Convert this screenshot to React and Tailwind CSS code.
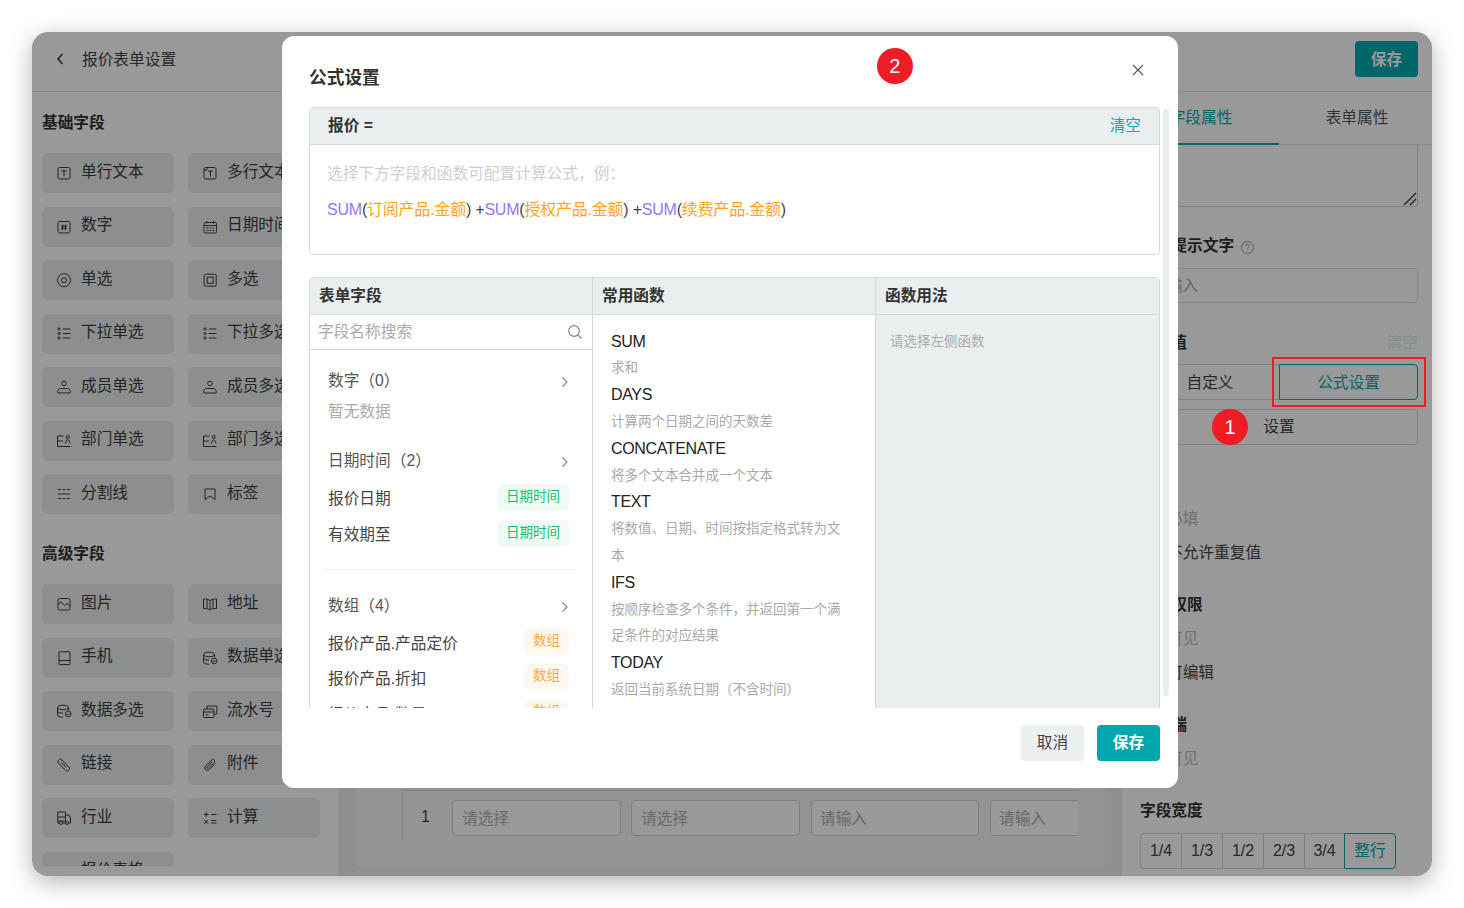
import React from "react";

const I = {
  text: <><rect x="2" y="2.5" width="12" height="11.5" rx="1.5"/><path d="M5.5 5.8h5M8 5.8v5.5"/></>,
  multi: <><rect x="2" y="2.5" width="12" height="11.5" rx="1.5"/><path d="M2 5h3V2.5M6 6h5M8.5 6v5.5"/></>,
  num: <><rect x="2" y="2.5" width="12" height="11.5" rx="1.5"/><path d="M6.8 5.5l-.6 5.5M9.8 5.5l-.6 5.5M5 7.2h6M5 9.3h6"/></>,
  date: <><rect x="2" y="3.5" width="12.5" height="10.5" rx="1.2"/><path d="M2 6.5h12.5M5 2v2.5M11.5 2v2.5M4.5 9h2M7.5 9h2M10.5 9h2M4.5 11.5h2M7.5 11.5h2M10.5 11.5h2"/></>,
  radio: <><circle cx="8" cy="8.2" r="6.5"/><circle cx="8" cy="8.2" r="2.6"/></>,
  check: <><rect x="2.2" y="2.2" width="12" height="12" rx="1.4"/><rect x="5.2" y="5.2" width="6" height="6"/></>,
  list: <><circle cx="3" cy="3" r="1.1"/><circle cx="3" cy="7.5" r="1.1"/><circle cx="3" cy="12" r="1.1"/><path d="M6.8 3h7.5M6.8 7.500h7.500M6.800 12h7.500"/></>,
  user: <><circle cx="8" cy="4.500" r="2.300"/><path d="M1.800 14v-1.500c0-1.700 1-3 2.700-3h7c1.700 0 2.700 1.300 2.700 3V14z"/></>,
  dept: <><path d="M7.500 13.500H1.500V3h6M1.500 8H7M7.500 13.500h7"/><circle cx="11.700" cy="4" r="1.500"/><path d="M9.500 10.500c.3-2 1.200-3.800 2.200-3.800s1.900 1.800 2.300 3.800"/></>,
  divider: <path d="M2 3.500h3M6.500 3.500h3M11 3.500h3M2 8h12M2 12.500h3M6.500 12.500h3M11 12.500h3"/>,
  tag: <path d="M3 3h10v10.500L8 10l-5 3.500z"/>,
  image: <><rect x="2" y="2.500" width="12" height="11.500" rx="1.500"/><path d="M2 8.500L5 6l3.500 3.500L11 7.500l3 2.500"/></>,
  map: <path d="M8 5c-1-1.500-2.500-2-4.500-2H1.500v9.500h2c2 0 3.500.5 4.500 1.500 1-1 2.500-1.500 4.500-1.500h2V3H12.500c-2 0-3.500.5-4.500 2zM8 5v9M5 3v9.500M11 3v9.500"/>,
  phone: <><rect x="3" y="1.800" width="11" height="12.800" rx="1"/><path d="M3 10.500h11M8.500 12.500h.1"/></>,
  db: <><ellipse cx="7" cy="4.500" rx="5.500" ry="2.300"/><path d="M1.500 4.500v7.500c0 1.200 2 2.200 5.500 2.200M1.500 8c0 1.300 2.200 2.200 5.500 2.200M12.500 4.500v3"/><circle cx="12.200" cy="11" r="2.800"/><path d="M10.900 11l1 1 1.600-1.700"/></>,
  serial: <><rect x="1.500" y="6" width="10.500" height="8.500" rx="1"/><path d="M1.500 9h10.500M3.800 11.800h2.500M5 6V3h9.800v8H12"/></>,
  link: <path d="M2.500 3c1-1 2.300-1 3.300 0l7 7c1 1 1 2.400 0 3.400s-2.300.8-3.200-.1L2.700 6.400C1.800 5.500 1.700 3.900 2.500 3zM5.500 5.500l5 5"/>,
  clip: <path d="M13.300 6.500l-6 6c-1.200 1.200-2.800 1.200-3.800.2s-1-2.600.2-3.800l5.800-5.800c.8-.8 1.900-.8 2.600-.1s.7 1.800-.1 2.600l-5.600 5.600c-.4.400-1 .400-1.300 0s-.4-.9 0-1.300l5-5"/>,
  biz: <><path d="M9.500 2H1.800v9h7.700zM1.800 7h7.700M9.500 5H13l1.500 3v5h-1.500M1.800 11v2h1.700M6.500 13h3"/><circle cx="5" cy="13" r="1.500"/><circle cx="11" cy="13" r="1.500"/></>,
  calc: <path d="M2 4.500h4.500M4.250 2.200v4.600M9 4.500h5.500M2.200 9.800l4 4M6.200 9.800l-4 4M9 10.500h5.500M9 13h5.500"/>,
  table: <><rect x="2" y="2.500" width="12" height="11.500" rx="1"/><path d="M2 6.500h12M8 6.500V14"/></>,
};

function Icon({ n }) {
  return (
    <svg viewBox="0 0 16 16" className="w-4 h-4 shrink-0" fill="none" stroke="currentColor" strokeWidth="1">
      {I[n]}
    </svg>
  );
}

function Tile({ n, t }) {
  return (
    <div className="h-10 bg-[#ebedef] rounded-md flex items-center pl-[14px] gap-[9px] text-[#3c3c3c] overflow-hidden whitespace-nowrap">
      <Icon n={n} />
      <span className="pb-[3px]">{t}</span>
    </div>
  );
}

const basic = [
  ["text", "单行文本"], ["multi", "多行文本"], ["num", "数字"], ["date", "日期时间"],
  ["radio", "单选"], ["check", "多选"], ["list", "下拉单选"], ["list", "下拉多选"],
  ["user", "成员单选"], ["user", "成员多选"], ["dept", "部门单选"], ["dept", "部门多选"],
  ["divider", "分割线"], ["tag", "标签"],
];
const adv = [
  ["image", "图片"], ["map", "地址"], ["phone", "手机"], ["db", "数据单选"],
  ["db", "数据多选"], ["serial", "流水号"], ["link", "链接"], ["clip", "附件"],
  ["biz", "行业"], ["calc", "计算"], ["table", "报价表格"],
];

function Left() {
  return (
    <div className="w-[306px] shrink-0 h-[774px] overflow-hidden pl-[10px] pt-[20px]">
      <div className="h-[22px] leading-[22px] font-bold text-[#333] mb-[19.200px]">基础字段</div>
      <div className="grid grid-cols-[132px_132px] gap-x-[14px] gap-y-[13.5px]">
        {basic.map(([n, t]) => <Tile key={t} n={n} t={t} />)}
      </div>
      <div className="h-[22px] leading-[22px] font-bold text-[#333] mt-[29px] mb-[19px]">高级字段</div>
      <div className="grid grid-cols-[132px_132px] gap-x-[14px] gap-y-[13.5px]">
        {adv.map(([n, t]) => <Tile key={t} n={n} t={t} />)}
      </div>
    </div>
  );
}

function Center() {
  const inputs = [["请选择", "w-[169px]", "mr-[10px]", "px-[9px]"], ["请选择", "w-[169px]", "mr-[11px]", "px-[9px]"], ["请输入", "w-[168px]", "mr-[11px]", "px-[8px]"], ["请输入", "w-[169px]", "", "px-[8px]"]];
  return (
    <div className="flex-1 bg-[#eeeff0] pt-[16px] pl-[18px] pr-[17px] pb-[10px] flex">
      <div className="flex-1 bg-[#f7f7f8] rounded flex flex-col justify-end pl-[46px] pb-[26px]">
        <div className="w-[676px] h-[50px] border-l border-t border-[#d9d9d9] flex items-start pt-[9px] overflow-hidden">
          <div className="w-[45px] mr-[4px] h-9 leading-[34px] text-center text-[#444] text-[16px] shrink-0">1</div>
          {inputs.map(([t, w, m, p], i) => (
            <div key={i} className={`${w} ${m} ${p} h-9 shrink-0 border border-[#d5d5d5] rounded bg-white leading-[36px] text-[#b0b0b0]`}>{t}</div>
          ))}
        </div>
      </div>
    </div>
  );
}

function Check({ on }) {
  return <span className={`w-4 h-4 border border-[#d5d5d5] rounded-sm mr-[11px] shrink-0 ${on ? "bg-[#00a8ad]" : "bg-white"}`} />;
}

function Right() {
  const label = "h-[22px] leading-[22px] font-bold text-[#333]";
  const row = "h-[22px] leading-[22px] flex items-center text-[#444]";
  return (
    <div className="w-[310px] shrink-0 flex flex-col">
      <div className="h-[53px] shrink-0 border-b border-[#e3e5e6] flex text-center">
        <div className="w-[157px] h-[53px] border-b-2 border-[#00a8ad] text-[#00a8ad] leading-[52px] pl-[1px]">字段属性</div>
        <div className="flex-1 leading-[52px] text-[#555] pl-[3px]">表单属性</div>
      </div>
      <div className="pl-[18px] pr-[14px]">
        <div className="relative h-[62px] border border-t-0 border-[#d5d8da] rounded-b">
          <svg className="absolute right-0 bottom-0 w-[14px] h-[14px]" viewBox="0 0 14 14" stroke="#333" strokeWidth="1.200" fill="none"><path d="M1 13L13 1M7 13l6-6" /></svg>
        </div>
        <div className={`${label} mt-[28px] flex items-center gap-[6px]`}>
          <span>输入提示文字</span>
          <svg viewBox="0 0 16 16" className="w-[15px] h-[15px] mt-[2px] text-[#999]" fill="none" stroke="currentColor" strokeWidth="1"><circle cx="8" cy="8" r="6.500" /><path d="M6 6.300c0-1.100.9-1.800 2-1.800s2 .7 2 1.800c0 1.500-2 1.500-2 3M8 11v.8" /></svg>
        </div>
        <div className="mt-[11px] h-[35px] border border-[#dcdee0] rounded px-[10px] leading-[33px] text-[#aaa]">请输入</div>
        <div className={`${label} mt-[29px] flex justify-between`}>
          <span>默认值</span><span className="font-normal text-[#d5eeee]">清空</span>
        </div>
        <div className="mt-[10px] h-9 flex text-center">
          <div className="w-[139px] border border-r-0 border-[#d5d8da] rounded-l leading-[36px] text-[#444]">自定义</div>
          <div className="flex-1 border border-[#00a8ad] rounded-r leading-[36px] text-[#00a8ad]">公式设置</div>
        </div>
        <div className="mt-[9px] h-9 border border-[#d5d8da] rounded text-center leading-[34px] text-[#444]">设置</div>
        <div className={`${row} mt-[63px] text-[#bbb]`}><Check />必填</div>
        <div className={`${row} mt-3`}><Check />不允许重复值</div>
        <div className={`${label} mt-[30px]`}>字段权限</div>
        <div className={`${row} mt-3 text-[#bbb]`}><Check />可见</div>
        <div className={`${row} mt-3`}><Check />可编辑</div>
        <div className={`${label} mt-[30px]`}>移动端</div>
        <div className={`${row} mt-3 text-[#bbb]`}><Check />可见</div>
        <div className={`${label} mt-[30px]`}>字段宽度</div>
        <div className="mt-[11px] h-9 flex text-center text-[#444] leading-[34px]">
          {["1/4", "1/3", "1/2", "2/3"].map((t, i) => (
            <div key={t} className={`w-[41px] text-[16px] border border-r-0 border-[#d5d8da] ${i === 0 ? "rounded-l" : ""}`}>{t}</div>
          ))}
          <div className="w-10 text-[16px] border border-r-0 border-[#d5d8da]">3/4</div>
          <div className="w-[52px] border border-[#00a8ad] rounded-r text-[#00a8ad]">整行</div>
        </div>
      </div>
    </div>
  );
}

const S = ({ children }) => <span className="text-[#9575ff]">{children}</span>;
const F = ({ children }) => <span className="text-[#ffa41c]">{children}</span>;

function Badge({ t, green }) {
  return (
    <span className={`mr-[6px] h-[27px] rounded-md flex items-center justify-center text-[13.500px] pb-[1px] ${green ? "w-[72px] bg-[#f1fbf6] text-[#12c06e]" : "w-[45px] bg-[#fff8f0] text-[#ffa940]"}`}>{t}</span>
  );
}

function Chevron() {
  return <svg viewBox="0 0 8 12" className="w-2 h-3 text-[#888] mr-[6px] mt-[2px]" fill="none" stroke="currentColor" strokeWidth="1.200"><path d="M1.500 1.500L6 6l-4.500 4.500" /></svg>;
}

function Row({ t, b, green, mt, pt }) {
  return (
    <div className={`${mt} flex items-center justify-between text-[#444]`}>
      <span className={pt}>{t}</span>
      <Badge t={b} green={green} />
    </div>
  );
}

const fns = [
  ["SUM", ["求和"]],
  ["DAYS", ["计算两个日期之间的天数差"]],
  ["CONCATENATE", ["将多个文本合并成一个文本"]],
  ["TEXT", ["将数值、日期、时间按指定格式转为文", "本"]],
  ["IFS", ["按顺序检查多个条件，并返回第一个满", "足条件的对应结果"]],
  ["TODAY", ["返回当前系统日期（不含时间）"]],
  ["ROUND", ["按指定位数对数值四舍五入"]],
];

function Modal() {
  const head = "h-[37px] bg-[#ebeeef] border-b border-[#d5d8da] font-bold text-[#333] leading-[36px] pl-[9px]";
  return (
    <div className="absolute left-[250px] top-[4px] w-[896px] h-[752px] bg-white rounded-xl flex flex-col">
      <div className="h-[71px] shrink-0 pl-[27px] pr-[34px] flex justify-between">
        <div className="text-[17.700px] font-bold text-[#333] pt-[29px] leading-[26px]">公式设置</div>
        <svg viewBox="0 0 12 12" className="w-3 h-3 mt-7 text-[#555]" fill="none" stroke="currentColor" strokeWidth="1.100"><path d="M1 1l10 10M11 1L1 11" /></svg>
      </div>
      <div className="relative h-[601px] shrink-0 overflow-hidden pl-[27px] pr-[18px]">
        <div className="h-[148px] border border-[#d5d8da] rounded">
          <div className={`${head} h-[36px] flex justify-between pl-[18px] pr-[18px] rounded-t`}>
            <span>报价 =</span><span className="font-normal text-[#12a9b0]">清空</span>
          </div>
          <div className="pl-[17px]">
            <div className="text-[#cfcfcf] mt-[17px] h-[24px] leading-[24px]">选择下方字段和函数可配置计算公式，例：</div>
            <div className="text-[#444] mt-3 h-[24px] leading-[24px] whitespace-nowrap text-[16px] tracking-[-0.22px]">
              <S>SUM</S>(<F>订阅产品.金额</F>) +<S>SUM</S>(<F>授权产品.金额</F>) +<S>SUM</S>(<F>续费产品.金额</F>)
            </div>
          </div>
        </div>
        <div className="mt-[22px] h-[520px] border border-[#d5d8da] rounded-t grid grid-cols-[283px_283px_1fr]">
          <div className="border-r border-[#d5d8da]">
            <div className={`${head} rounded-tl`}>表单字段</div>
            <div className="h-[35px] border-b border-[#d5d8da] flex items-center justify-between pl-2 pr-[9px] text-[#aaa]">
              <span className="pb-[1px]">字段名称搜索</span>
              <svg viewBox="0 0 16 16" className="w-4 h-4 text-[#888]" fill="none" stroke="currentColor" strokeWidth="1.200"><circle cx="7" cy="7" r="5.300" /><path d="M11 11l3.500 3.500" /></svg>
            </div>
            <div className="pl-[18px] pr-[17px]">
              <div className="mt-[20px] h-[22px] leading-[22px] flex justify-between items-center text-[#555]"><span>数字（0）</span><Chevron /></div>
              <div className="mt-[9px] h-[22px] leading-[22px] text-[#aaa]">暂无数据</div>
              <div className="mt-[27px] h-[22px] leading-[22px] flex justify-between items-center text-[#555]"><span>日期时间（2）</span><Chevron /></div>
              <Row t="报价日期" b="日期时间" green mt="mt-[12px]" pt="pt-[2px]" />
              <Row t="有效期至" b="日期时间" green mt="mt-[9px]" pt="pt-[2px]" />
              <div className="mt-[22px] h-px bg-[#eceeef] -ml-[5px]" />
              <div className="mt-[25px] h-[22px] leading-[22px] flex justify-between items-center text-[#555]"><span>数组（4）</span><Chevron /></div>
              <Row t="报价产品.产品定价" b="数组" mt="mt-[11px]" pt="pt-[4px]" />
              <Row t="报价产品.折扣" b="数组" mt="mt-2" pt="pt-[3px]" />
              <Row t="报价产品.数量" b="数组" mt="mt-[9px]" pt="pt-[3px]" />
            </div>
          </div>
          <div className="border-r border-[#d5d8da]">
            <div className={head}>常用函数</div>
            <div className="pl-[18px] pr-[34px] pt-[13.600px]">
              {fns.map(([n, d]) => (
                <div key={n}>
                  <div className="text-[#222] text-[16px] tracking-[-0.36px] leading-[25.800px]">{n}</div>
                  <div className="pt-px">
                    {d.map((x) => <div key={x} className="text-[13.500px] leading-[26.800px] text-[#aaa] whitespace-nowrap">{x}</div>)}
                  </div>
                </div>
              ))}
            </div>
          </div>
          <div className="bg-[#ebeeef]">
            <div className={head}>函数用法</div>
            <div className="pl-[14px] pt-[14px] leading-[26.800px] text-[13.500px] text-[#aaa]">请选择左侧函数</div>
          </div>
        </div>
        <div className="absolute right-[9px] top-[2px] w-[6px] h-[587px] rounded-full bg-[#ebeeef]" />
      </div>
      <div className="pt-[17px] pr-[18px] flex justify-end gap-[13px]">
        <div className="w-[63px] h-9 rounded bg-[#edf0f1] text-center leading-[36px] text-[#444]">取消</div>
        <div className="w-[63px] h-9 rounded bg-[#00a8ad] text-center leading-[36px] text-white font-bold">保存</div>
      </div>
    </div>
  );
}

function Num({ n, className }) {
  return <div className={`absolute w-9 h-9 rounded-full bg-[#ee1c25] text-white text-xl flex items-center justify-center ${className}`}>{n}</div>;
}

export default function App() {
  return (
    <div className="w-[1464px] h-[908px] bg-white p-8 text-[15.700px] [font-family:'Liberation_Sans','Noto_Sans_CJK_SC',sans-serif]">
      <div className="relative w-[1400px] h-[844px] rounded-2xl overflow-hidden bg-white shadow-[0_6px_24px_rgba(0,0,0,0.3)] flex flex-col">
        <div className="h-[60px] shrink-0 border-b border-[#e3e5e6] flex items-center pl-[23px] pr-[14px] pb-[6px]">
          <svg viewBox="0 0 10 14" className="w-[10px] h-[14px] text-[#333]" fill="none" stroke="currentColor" strokeWidth="1.500"><path d="M7.500 2L3 7l4.500 5" /></svg>
          <span className="ml-[17px] text-[#444] pt-[2px]">报价表单设置</span>
          <div className="ml-auto w-[63px] h-9 rounded bg-[#00a8ad] text-white text-center leading-[38px] font-bold">保存</div>
        </div>
        <div className="flex-1 flex min-h-0">
          <Left />
          <Center />
          <Right />
        </div>
        <div className="absolute inset-0 bg-black/40" />
        <Modal />
        <div className="absolute left-[1240px] top-[325px] w-[154px] h-[50px] border-2 border-[#ee1c25]" />
        <Num n="1" className="left-[1180px] top-[376.700px]" />
        <Num n="2" className="left-[844.700px] top-[15.500px]" />
      </div>
    </div>
  );
}
